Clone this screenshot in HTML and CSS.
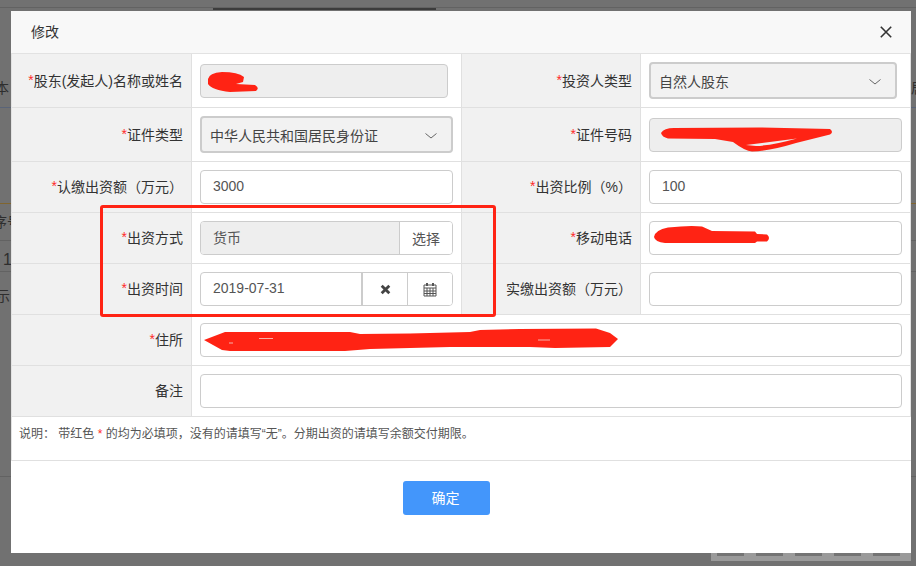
FILE: index.html
```html
<!DOCTYPE html>
<html lang="zh-CN">
<head>
<meta charset="utf-8">
<title>修改</title>
<link rel="stylesheet" href="styles.css">
</head>
<body>
<div class="backdrop">
  <i class="bg-line bar-top"></i>
  <i class="bg-line line-top"></i>
  <i class="bg-line line-blue"></i>
  <i class="bg-line line-orange"></i>
  <i class="bg-line line-a"></i>
  <i class="bg-line line-b"></i>
  <i class="bg-line line-c"></i>
  <span class="bg-text t1">本</span>
  <span class="bg-text t2">序号</span>
  <span class="bg-text t3">1</span>
  <span class="bg-text t4">示</span>
  <span class="bg-text t5">居</span>
  <div class="strip"><i></i><i></i><i></i><i></i><i></i></div>
</div>

<main class="modal">
  <header class="modal-head">
    <h1 class="modal-title">修改</h1>
    <svg class="close-icon" width="12" height="12" viewBox="0 0 12 12"><path d="M.8.8l10.4 10.4M11.2.8L.8 11.2"/></svg>
  </header>

  <div class="form-grid">
    <div class="lab"><b>*</b>股东(发起人)名称或姓名</div>
    <div class="cell"><div class="input disabled narrow"></div></div>
    <div class="lab"><b>*</b>投资人类型</div>
    <div class="cell">
      <div class="select narrow">自然人股东
        <svg class="chev" width="12" height="6" viewBox="0 0 12 6"><path d="M.5.5L6 5l5.500-4.500"/></svg>
      </div>
    </div>

    <div class="lab"><b>*</b>证件类型</div>
    <div class="cell">
      <div class="select">中华人民共和国居民身份证
        <svg class="chev" width="12" height="6" viewBox="0 0 12 6"><path d="M.5.5L6 5l5.500-4.500"/></svg>
      </div>
    </div>
    <div class="lab"><b>*</b>证件号码</div>
    <div class="cell"><div class="input disabled"></div></div>

    <div class="lab short"><b>*</b>认缴出资额（万元）</div>
    <div class="cell short"><div class="input">3000</div></div>
    <div class="lab short"><b>*</b>出资比例（%）</div>
    <div class="cell short"><div class="input">100</div></div>

    <div class="lab short"><b>*</b>出资方式</div>
    <div class="cell short">
      <div class="group">
        <div class="group-main disabled">货币</div>
        <div class="group-btn pick">选择</div>
      </div>
    </div>
    <div class="lab short"><b>*</b>移动电话</div>
    <div class="cell short"><div class="input"></div></div>

    <div class="lab short"><b>*</b>出资时间</div>
    <div class="cell short">
      <div class="group">
        <div class="group-main date">2019-07-31</div>
        <div class="group-btn icon-btn first">
          <svg width="11" height="11" viewBox="0 0 11 11"><path class="x-glyph" d="M1.700 1.700l7.600 7.600M9.300 1.700L1.700 9.300"/></svg>
        </div>
        <div class="group-btn icon-btn last">
          <svg width="14" height="15" viewBox="0 0 14 15"><path class="cal-glyph" d="M1 3h12v11H1zM1 6h12M1 9h12M1 11.500h12M4 6v8M7 6v8M10 6v8"/><path class="cal-pin" d="M4 1v3M10 1v3"/></svg>
        </div>
      </div>
    </div>
    <div class="lab short">实缴出资额（万元）</div>
    <div class="cell short"><div class="input"></div></div>

    <div class="lab short"><b>*</b>住所</div>
    <div class="cell short wide"><div class="input"></div></div>

    <div class="lab short">备注</div>
    <div class="cell short wide"><div class="input"></div></div>

    <div class="note">说明： 带红色 <b>*</b> 的均为必填项，没有的请填写“无”。分期出资的请填写余额交付期限。</div>
  </div>

  <footer class="modal-foot">
    <button class="ok" type="button">确定</button>
  </footer>
</main>

<svg class="scribble" width="916" height="566" viewBox="0 0 916 566">
  <path class="red" d="M208 79Q209 73 222 72Q238 72 244 77L243 82L236 84L255 85Q260 88 256 91L230 92Q212 90 208 84Z"/>
  <path class="red" d="M661 133Q664 128 674 128L760 127.500L830 129Q834 132 830 134.500L796 143Q770 151 752 151.500Q745 151 733 142L715 139L668 138.500Q662 137 661 133Z"/>
  <path class="hole" d="M746 145L797 138.500Q772 145.500 756 146Z"/>
  <path class="red" d="M654 237Q655 230 668 227.500Q690 225 702 226.500L712 231L755 231.500L757 234L767 234.500Q771 238 767 241.500L757 241.500L755 243L665 243Q655 242 654 237Z"/>
  <path class="red" d="M204 340L225 332L350 332L360 334L410 333.500L470 332L480 330L520 329L596 328.500L610 333L618 339L610 347L555 348L530 347L450 347L370 349L345 351L230 351L222 350Z"/>
  <path class="speck" d="M259 338.500h14M229 343h4M538 340h12"/>
</svg>
<div class="mark-box"></div>
</body>
</html>
```
FILE: styles.css
```css
* { box-sizing: border-box; }
html, body { margin: 0; height: 100%; overflow: hidden; }
body {
  background: #717171;
  font-family: "Liberation Sans", "Noto Sans CJK SC", sans-serif;
  font-size: 14px;
  color: #333;
  padding: 11px 0 0 11px;
}

/* dimmed page behind the dialog */
.backdrop { position: absolute; inset: 0; overflow: hidden; }
.bg-line { position: absolute; left: 0; right: 0; height: 1px; background: #626262; }
.bar-top { left: 213px; right: auto; width: 223px; top: 7px; height: 3px; background: #3c3c3c; }
.line-top { top: 7px; }
.line-blue { top: 107px; background: #5a6478; }
.line-orange { top: 203px; background: #80652f; }
.line-a { top: 240px; }
.line-b { top: 271px; }
.line-c { top: 476px; }
.bg-text { position: absolute; color: #2e2e2e; font-size: 14px; line-height: 20px; white-space: nowrap; }
.t1 { left: -5px; top: 78px; }
.t2 { left: -7px; top: 212px; }
.t3 { left: 3px; top: 250px; font-size: 16px; }
.t4 { left: -4px; top: 286px; }
.t5 { left: 911px; top: 78px; }
.strip {
  position: absolute; left: 711px; top: 545px; width: 200px; height: 16px;
  background: #9a9a9a; display: flex; gap: 12px; padding: 0 6px;
}
.strip i { width: 27px; height: 11px; background: #747474; }

/* dialog */
.modal {
  position: relative;
  width: 900px;
  height: 542px;
  background: #fff;
  display: flex;
  flex-direction: column;
}
.modal-head {
  height: 43px;
  flex: none;
  background: #f8f8f8;
  border-bottom: 1px solid #e2e2e2;
  display: flex;
  align-items: center;
  justify-content: space-between;
  padding: 0 19px 0 20px;
}
.modal-title { margin: 0 0 2px; font-size: 14px; font-weight: 400; color: #333; }
.close-icon path { fill: none; stroke: #333; stroke-width: 1.600; }

.form-grid {
  display: grid;
  grid-template-columns: 180px 270px 179px 270px;
  border-left: 1px solid #e2e2e2;
  flex: none;
}
.lab, .cell {
  height: 54px;
  border-bottom: 1px solid #e0e0e0;
  border-right: 1px solid #e0e0e0;
  display: flex;
  align-items: center;
}
.short { height: 51px; }
.lab {
  background: #f1f1f1;
  justify-content: flex-end;
  padding: 0 8px 2px 0;
  color: #333;
  white-space: nowrap;
}
.lab b, .note b { color: #ff2a2a; font-weight: 400; }
.cell { padding-left: 8px; }
.wide { grid-column: span 3; }

.input {
  width: 253px;
  height: 34px;
  border: 1px solid #ccc;
  border-radius: 4px;
  background: #fff;
  padding: 0 12px;
  line-height: 30px;
  color: #555;
}
.wide .input { width: 702px; }
.disabled { background: #eee; }
.input.narrow { width: 248px; }
.select {
  width: 253px;
  height: 37px;
  border: 2px solid #ccc;
  border-radius: 4px;
  background: #f2f2f2;
  padding: 0 14px 0 8px;
  display: flex;
  align-items: center;
  justify-content: space-between;
  color: #444;
}
.select.narrow { width: 248px; }
.chev { margin-top: 2px; }
.chev path { fill: none; stroke: #666; stroke-width: 1; }

.group {
  width: 253px;
  height: 34px;
  display: flex;
  border: 1px solid #ccc;
  border-radius: 4px;
  overflow: hidden;
}
.group-main {
  flex: 1;
  padding: 0 12px;
  line-height: 30px;
  color: #555;
}
.group-main.disabled { border-right: 1px solid #ccc; line-height: 32px; }
.group-main.date { border-right: 2px solid #ccc; }
.group-btn {
  flex: none;
  display: flex;
  align-items: center;
  justify-content: center;
  background: #fff;
  color: #555;
}
.pick { width: 52px; padding-bottom: 1px; }
.icon-btn { width: 45px; }
.icon-btn.first { width: 44px; }
.icon-btn.last { border-left: 1px solid #ccc; }
.x-glyph { fill: none; stroke: #444; stroke-width: 2.800; }
.cal-glyph { fill: none; stroke: #555; stroke-width: 1; }
.cal-pin { fill: none; stroke: #555; stroke-width: 2; }

.note {
  grid-column: 1 / -1;
  height: 44px;
  border-bottom: 1px solid #e0e0e0;
  padding: 8px 8px 0 7px;
  font-size: 12px;
  line-height: 18px;
  color: #555;
}

.modal-foot {
  display: flex;
  justify-content: center;
  padding: 20px 29px 0 0;
}
.ok {
  width: 87px;
  height: 34px;
  border: 0;
  border-radius: 3px;
  background: #4396fb;
  color: #fff;
  font: inherit;
  padding: 0 2px 3px 0;
}

/* hand-drawn marks on top of the dialog */
.scribble { position: absolute; left: 0; top: 0; pointer-events: none; }
.red { fill: #ff2314; }
.hole { fill: #eee; }
.speck { fill: none; stroke: #f8b0a8; stroke-width: 1; }
.mark-box {
  position: absolute;
  left: 100px;
  top: 205px;
  width: 396px;
  height: 112px;
  border: 3px solid #ff2314;
  border-radius: 3px;
}
```
